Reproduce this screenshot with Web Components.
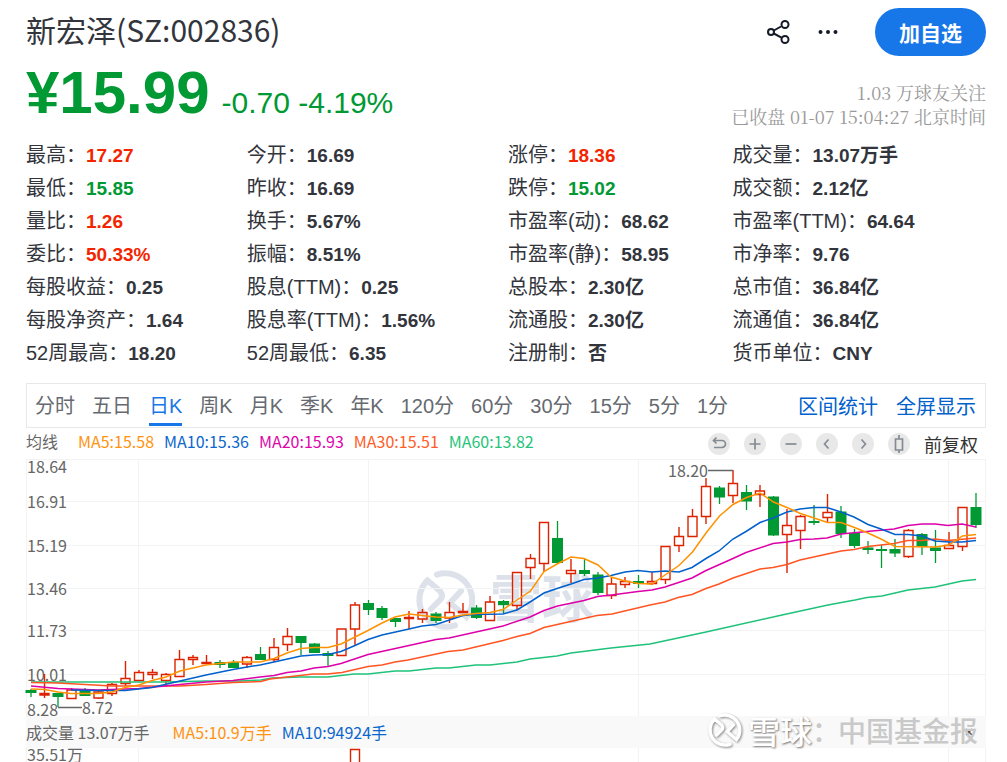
<!DOCTYPE html>
<html lang="zh-CN">
<head>
<meta charset="utf-8">
<meta name="viewport" content="width=device-width, initial-scale=1">
<title>新宏泽(SZ:002836)</title>
<style>
	body {
		margin: 0;
		background: white;
		color: #33353c;
		font-family: "Liberation Sans", "Noto Sans CJK SC", sans-serif;
		--up: #f32500;
		--down: #009933;
		--link: #0060cc;
		--line: #e8e8ea;
	}
</style>
</head>
<body>
<stock-page>
	<stock-header slot="header" price="¥15.99" change="-0.70 -4.19%">
		<span slot="name">新宏泽(SZ:002836)</span>
		<span slot="followers">1.03 万球友关注</span>
		<span slot="time">已收盘 01-07 15:04:27 北京时间</span>
	</stock-header>
	<stock-stats slot="stats"></stock-stats>
	<chart-tabs slot="tabs"></chart-tabs>
	<chart-toolbar slot="toolbar"></chart-toolbar>
	<k-line-chart slot="chart"></k-line-chart>
	<volume-chart slot="volume"></volume-chart>
</stock-page>

<script>
"use strict"

class StockPage extends HTMLElement {
	constructor() {
		super()
		this.attachShadow({ mode: "open" }).innerHTML = `
			<style>
				:host {
					display: block;
					padding: 8px 21px 0 26px;
				}
				main {
					display: flex;
					flex-direction: column;
				}
			</style>
			<main>
				<slot name="header"></slot>
				<slot name="stats"></slot>
				<slot name="tabs"></slot>
				<slot name="toolbar"></slot>
				<slot name="chart"></slot>
				<slot name="volume"></slot>
			</main>
		`
	}
}

class StockHeader extends HTMLElement {
	constructor() {
		super()
		this.attachShadow({ mode: "open" })
	}

	connectedCallback() {
		this.shadowRoot.innerHTML = `
			<style>
				:host {
					display: block;
				}
				.top, .quote, .actions {
					display: flex;
					justify-content: space-between;
				}
				.actions {
					align-items: center;
					gap: 24px;
				}
				h1 {
					margin: 0;
					font: 400 30px/42px "Noto Sans CJK SC", sans-serif;
				}
				button {
					border: 0;
					padding: 0;
					background: none;
					cursor: pointer;
				}
				.icon {
					width: 26px;
					height: 26px;
				}
				.icon svg {
					display: block;
				}
				.follow {
					margin-left: 10px;
					padding: 0 24px;
					border-radius: 24px;
					background: #1776e8;
					color: white;
					font: 700 21px/48px "Noto Sans CJK SC", sans-serif;
				}
				.quote {
					margin-top: 7px;
				}
				.price {
					color: var(--down);
					font-size: 30px;
					line-height: 60px;
				}
				.price strong {
					margin-right: 12px;
					font-size: 60px;
				}
				.info {
					padding-top: 17px;
					color: #999;
					font: 400 18px/24px "Noto Serif CJK SC", "Noto Serif SC", "Noto Sans CJK SC", serif;
					text-align: right;
				}
				.info div {
					white-space: nowrap;
				}
			</style>
			<div class="top">
				<h1><slot name="name"></slot></h1>
				<div class="actions">
					<button class="icon" aria-label="分享">
						<svg width="26" height="26" viewBox="0 0 26 26" fill="none" stroke="#151a28" stroke-width="2">
							<circle cx="6" cy="13" r="3"/>
							<circle cx="20" cy="5.5" r="3.5"/>
							<circle cx="20" cy="20.5" r="3.5"/>
							<path d="M8.8 11.5 16 7.5M8.8 14.5 16.5 18.7"/>
						</svg>
					</button>
					<button class="icon" aria-label="更多">
						<svg width="26" height="26" viewBox="0 0 26 26" fill="#151a28">
							<circle cx="5.5" cy="13" r="2"/>
							<circle cx="13" cy="13" r="2"/>
							<circle cx="20.5" cy="13" r="2"/>
						</svg>
					</button>
					<button class="follow">加自选</button>
				</div>
			</div>
			<div class="quote">
				<div class="price"><strong>${this.getAttribute("price")}</strong>${this.getAttribute("change")}</div>
				<div class="info">
					<div><slot name="followers"></slot></div>
					<div><slot name="time"></slot></div>
				</div>
			</div>
		`
	}
}

// label, value, direction
const STATS = [
	[["最高", "17.27", "up"], ["今开", "16.69"], ["涨停", "18.36", "up"], ["成交量", "13.07万手"]],
	[["最低", "15.85", "down"], ["昨收", "16.69"], ["跌停", "15.02", "down"], ["成交额", "2.12亿"]],
	[["量比", "1.26", "up"], ["换手", "5.67%"], ["市盈率(动)", "68.62"], ["市盈率(TTM)", "64.64"]],
	[["委比", "50.33%", "up"], ["振幅", "8.51%"], ["市盈率(静)", "58.95"], ["市净率", "9.76"]],
	[["每股收益", "0.25"], ["股息(TTM)", "0.25"], ["总股本", "2.30亿"], ["总市值", "36.84亿"]],
	[["每股净资产", "1.64"], ["股息率(TTM)", "1.56%"], ["流通股", "2.30亿"], ["流通值", "36.84亿"]],
	[["52周最高", "18.20"], ["52周最低", "6.35"], ["注册制", "否"], ["货币单位", "CNY"]]
]

class StockStats extends HTMLElement {
	constructor() {
		super()
		const rows = STATS.map(row => `<tr>${row.map(([label, value, dir]) =>
			`<td>${label}：<b class="${dir || ""}">${value}</b></td>`).join("")}</tr>`).join("")
		this.attachShadow({ mode: "open" }).innerHTML = `
			<style>
				:host {
					display: block;
					margin-top: 6px;
				}
				table {
					width: 100%;
					table-layout: fixed;
					border-collapse: collapse;
					font-size: 20px;
					line-height: 33px;
				}
				td {
					height: 33px;
					padding: 0;
					white-space: nowrap;
				}
				b {
					font-size: 19px;
				}
				.up { color: var(--up); }
				.down { color: var(--down); }
			</style>
			<table>
				<colgroup><col style="width:23%"><col style="width:27.2%"><col style="width:23.4%"><col></colgroup>
				<tbody>${rows}</tbody>
			</table>
		`
	}
}

class ChartTabs extends HTMLElement {
	constructor() {
		super()
		const tabs = ["分时", "五日", "日K", "周K", "月K", "季K", "年K", "120分", "60分", "30分", "15分", "5分", "1分"]
		this.attachShadow({ mode: "open" }).innerHTML = `
			<style>
				:host {
					display: flex;
					justify-content: space-between;
					margin-top: 13px;
					padding: 0 9px 0 8px;
					border: 1px solid var(--line);
					font-size: 20px;
					line-height: 39px;
					white-space: nowrap;
				}
				nav {
					display: flex;
					gap: 17px;
				}
				button {
					padding: 5px 0 0;
					margin-bottom: 1px;
					border: 0;
					border-bottom: 3px solid transparent;
					background: none;
					color: #666a70;
					font: inherit;
					line-height: 34px;
					cursor: pointer;
				}
				button.active {
					color: #1776e8;
					border-color: #1776e8;
				}
				.links {
					gap: 18px;
				}
				a {
					padding-top: 4px;
					color: var(--link);
					text-decoration: none;
				}
			</style>
			<nav>${tabs.map(t => `<button class="${t === "日K" ? "active" : ""}">${t}</button>`).join("")}</nav>
			<nav class="links"><a href="#range">区间统计</a><a href="#full">全屏显示</a></nav>
		`
		this.shadowRoot.querySelector("nav").addEventListener("click", e => {
			if (e.target.localName !== "button") return
			this.shadowRoot.querySelector(".active").classList.remove("active")
			e.target.classList.add("active")
		})
	}
}

class ChartToolbar extends HTMLElement {
	constructor() {
		super()
		const tools = [
			["还原", "M5.500 7.500h8.500a3.300 3.300 0 0 1 0 7H6M8.500 4.500 5.500 7.500l3 3"],
			["放大", "M11 5.500v11M5.500 11h11"],
			["缩小", "M5.500 11h11"],
			["左移", "M12.500 6.500 8.500 11l4 4.500"],
			["右移", "M9.500 6.500l4 4.500-4 4.500"],
			["K线", "M7.500 6h7v11h-7zM11 2v4M11 17v3"]
		]
		this.attachShadow({ mode: "open" }).innerHTML = `
			<style>
				:host {
					display: flex;
					justify-content: space-between;
					height: 31px;
					font: 16px/26px "Noto Sans CJK SC", sans-serif;
					white-space: nowrap;
				}
				.legend, .tools {
					display: flex;
					gap: 10px;
				}
				.label {
					margin-right: 10px;
					color: #666;
				}
				.tools {
					align-items: center;
					gap: 14px;
					padding-right: 8px;
				}
				button {
					padding: 0;
					border: 0;
					background: none;
					color: #333;
					font: inherit;
					font-size: 18px;
					cursor: pointer;
				}
				.tool {
					width: 22px;
					height: 22px;
					border-radius: 50%;
					background: #e8e8e8;
				}
				svg {
					display: block;
				}
			</style>
			<div class="legend">
				<span class="label">均线</span>
				<span style="color:#ff9310">MA5:15.58</span>
				<span style="color:#0c66cc">MA10:15.36</span>
				<span style="color:#dd05aa">MA20:15.93</span>
				<span style="color:#ff5c28">MA30:15.51</span>
				<span style="color:#26c47b">MA60:13.82</span>
			</div>
			<div class="tools">
				${tools.map(([name, d]) => `<button class="tool" aria-label="${name}"><svg width="22" height="22" viewBox="0 0 22 22" fill="none" stroke="#858b92" stroke-width="1.700"><path d="${d}"/></svg></button>`).join("")}
				<button>前复权</button>
			</div>
		`
	}
}

// r = rising, f = falling; then high, body top, body bottom, low
const CANDLES = [
	"f 689 690 693 697", "r 674 693.5 695 698", "f 693 693 697 707", "r 688 690 698.5 699",
	"f 688 690 696 696", "r 691 692 698 699", "r 683 684.5 693.5 696", "r 661 678.5 683.5 686",
	"r 670 672.5 680.5 681", "r 669 672.5 674.5 679", "r 673 674.5 680.5 687", "r 650 659.5 676.5 677",
	"r 655 657.5 659.5 665", "r 655 662.5 663.5 664", "f 660 662 665 668", "f 660 662 668 668",
	"r 656 657.5 664 668", "f 647 654 660 660", "r 638 647.5 659.5 662", "r 628 636.5 644.5 651",
	"f 636 636 643 655", "f 643 643.5 653 653", "f 651 653 656 666", "r 629 629 655.5 656",
	"r 602 605 629 646", "f 600 603 610 615", "f 606 608 618 620", "f 618 618 622 627",
	"r 611 617.5 618.5 629", "r 609 612.5 619 623", "f 612 613.5 621 623", "r 602 612.5 618 623",
	"r 603 611.5 612.5 613", "f 605 607.5 618 619", "r 596 602 620.5 621", "f 600 601 605 613",
	"r 572 572.5 605.5 610", "r 554 558.5 567.5 579", "r 522 522.5 563.5 572", "f 521 538 563 563",
	"r 559 570.5 573.5 583", "f 559 570 574 576", "f 572 574.5 593 595", "r 578 584 595.5 599",
	"r 577 581.5 584.5 588", "f 575 581 584 588", "r 572 581.5 583.5 585", "r 546 546.5 579.5 584",
	"r 527 536.5 545.5 552", "r 509 516.5 536.5 537", "r 478 486.5 516.5 524", "f 486 487.5 497.5 504",
	"r 470 483.5 495.5 503", "f 485 492 501.5 510", "r 485 491 494.5 507", "f 496 496.5 535.5 536",
	"r 509 525.5 534.5 573", "r 515 516.5 530.5 549", "f 505 521 523 525", "r 494 512.5 517.5 522",
	"f 506 511.5 534 538", "f 529 533 546 548", "f 541 547.5 550 554", "f 545 549 551 568",
	"f 539 549 553.5 557", "r 529 530.5 556.5 558", "f 533 534 547 555", "f 530 547.5 551 563",
	"r 532 545.5 548.5 549", "r 507 507.5 546.5 551", "f 493 507 525 528"
]

const AVERAGES = {
	"#1fc27a": "31,682 166,682 206,681 240,681 261,680 272,678 300,677 328,677 354,674 368,674 395,671 409,671 436,668 449,668 476,665 490,665 517,662 530,659 557,656 571,653 611,648 650,644 706,632 782,615 828,605 855,600 867,597.5 882,596 908,590 935,587 962,581 976,579.5",
	"#ff5522": "31,682.5 58,683 85,684.5 112,686 180,686 206,684.5 233,682.5 261,681.5 270,679 300,675.5 313,674 327,674 342,672.5 368,666.5 382,665 395,662 408,660 448,651.5 463,650 503,640.5 517,636.5 530,633.5 544,627.5 597,615.5 612,614 650,605 665,602 678,597.5 692,594.5 706,588.5 719,584 733,578 760,569 773,567.5 787,564.5 800,560 841,551 854,549.5 868,546.5 894,543.5 908,540.5 922,540.5 935,539 948,540.5 976,538",
	"#dd00aa": "31,686 58,688.5 98,690 139,688.5 180,684.5 206,682 233,680.5 260,677 274,675.5 287,672.5 301,671 314,668 328,666.5 341,663.5 368,654.5 409,645.5 436,639.5 449,638 503,626 530,617 544,610.5 557.5,606 584,600.5 597.5,596.5 611.5,595 638,591.5 652,590 665,587 692,578 706,570.5 733,558.5 746,552.5 773,543.5 787,542 800,539.5 814,539 827,538 841,534 867,531.5 894,529 908,525.5 922,524 935,524 948,525.5 962,524 976,527",
	"#0060cc": "71,690 98,690.5 125,690.5 152,687.5 180,681 206,675 233,669.5 247,667 260,665 274,662 301,656 314,655 328,654.5 341,651.5 355,645.5 368,639.5 382,635 409,629 422,626 436,624.5 463,615.5 473,614.5 503,614 517,610 530,602 544,593 557,588.5 571,584 584,579.5 598,578 611,575.5 625,572 638,570.5 652,572 665,571 679,572 692,567.5 706,558.5 719,551 733,539 746,531.5 760,522.5 773,518 787,512 800,509 814,507.5 827,507.5 841,512 854,517 868,524.5 881,529 895,534.5 908,534.5 922,536 935,541 949,542 962,542 976,540.5",
	"#ff9200": "31,689 45,689.5 58,692 71,693.5 98,693.5 112,692 125,687.5 139,685 152,680.5 166,677 180,671 206,665 233,662 260,662 274,658.5 287,653 301,648.5 314,647.5 328,647.5 341,644 355,637 368,630.5 382,623 395,617 409,614 422,615.5 436,617 449,617.5 463,615 476,613.5 490,612.5 503,609.5 517,600 530.5,591 544,571.5 557,564 571,557 584,558.5 598,565 611,577 625,581 638,583.5 652,584 665,575 679,565.5 692.5,552 706,533 719.5,516 733,504.5 746.5,497.5 760,493 773.5,502 787,507.5 800.5,513.5 814,518 827.5,522.5 841,522.5 854.5,527.5 868,533 881,539 895,546.5 935,547 949,545 962.5,536 976,534.5"
}

const AXIS = [["18.64", 473], ["16.91", 508], ["15.19", 552], ["13.46", 595], ["11.73", 637], ["10.01", 681], ["8.28", 716]]

const LOGO = `<path d="M437 574.600A27 27 0 0 1 466.500 617L450 603 461 591M455 625.400A27 27 0 0 1 427.500 580.500L440 591Q444 596 440 600L431 609"/>`

class KLineChart extends HTMLElement {
	constructor() {
		super()
		this.attachShadow({ mode: "open" }).innerHTML = `
			<style>
				:host {
					display: block;
				}
				svg {
					display: block;
					width: 100%;
					height: auto;
					overflow: visible;
				}
				text {
					fill: #666;
					font: 16px "Noto Sans CJK SC", sans-serif;
				}
				.brand {
					fill: #dde1ea;
					font-size: 52px;
					font-weight: 700;
				}
			</style>
			<svg viewBox="26 459 960 257" role="img" aria-label="日K线">
				<g fill="none" stroke="#dde1ea" stroke-width="6" stroke-linecap="round">${LOGO}</g>
				<text class="brand" x="490" y="618">雪球</text>
				<path fill="none" stroke="#f3f3f3" d="M26 459.500h960M26 501.500h960M26 545.500h960M26 588.500h960M26 630.500h960M26 674.500h960M26.500 459v257M138.500 459v257M368.500 459v257M638.500 459v257M948.500 459v257M985.500 459v257"/>
				${AXIS.map(([t, y]) => `<text x="27" y="${y}">${t}</text>`).join("")}
				${this.getCandles()}
				${Object.entries(AVERAGES).map(([color, points]) =>
					`<polyline fill="none" stroke="${color}" stroke-width="1.500" points="${points}"/>`).join("")}
				<path fill="none" stroke="#666" stroke-width="1.300" d="M708 470.500h25M58 707.500h24"/>
				<text x="668" y="477">18.20</text>
				<text x="82" y="714">8.72</text>
			</svg>
		`
	}

	getCandles() {
		return CANDLES.map((candle, i) => {
			const [dir, ...values] = candle.split(" ")
			const [high, top, bottom, low] = values.map(Number)
			const x = 31 + i * 13.5
			if (dir === "f") {
				return `<path stroke="#009933" stroke-width="1.300" d="M${x} ${high}V${low}"/>
					<rect x="${x - 5.5}" y="${top}" width="11" height="${bottom - top}" fill="#009933"/>`
			}
			return `<path fill="none" stroke="#dd2200" stroke-width="1.400" d="M${x} ${high}V${top}M${x} ${bottom}V${low}M${x - 4.5} ${top}h9V${bottom}h-9z"/>`
		}).join("")
	}
}

class VolumeChart extends HTMLElement {
	constructor() {
		super()
		this.attachShadow({ mode: "open" }).innerHTML = `
			<style>
				:host {
					display: block;
					position: relative;
					font: 16px/32px "Noto Sans CJK SC", sans-serif;
					white-space: nowrap;
				}
				.legend {
					display: flex;
					align-items: center;
					gap: 10px;
					background: #f9f9f9;
					color: #666;
				}
				.legend span:first-child {
					margin-right: 13px;
				}
				.close {
					display: flex;
					margin: 0 12px 0 auto;
					padding: 0;
					border: 0;
					background: none;
				}
				.plot {
					display: block;
					width: 100%;
					height: auto;
				}
				.plot text {
					fill: #666;
				}
				/* publisher mark laid over the bar */
				.mark {
					position: absolute;
					top: -2px;
					right: 8px;
					display: flex;
					align-items: center;
					height: 32px;
					color: #c9c9c9;
					font-size: 28px;
					font-weight: 500;
					pointer-events: none;
				}
				.mark svg {
					width: 36px;
					height: 36px;
					margin-right: 5px;
					filter: drop-shadow(1px 1px 1px #888);
				}
				.mark b {
					color: white;
					font-size: 32px;
					font-weight: 500;
					text-shadow: 1px 1px 2px #777;
				}
				.mark i {
					width: 26px;
					font-style: normal;
				}
			</style>
			<div class="legend">
				<span>成交量 13.07万手</span>
				<span style="color:#ff9310">MA5:10.9万手</span>
				<span style="color:#0c66cc">MA10:94924手</span>
				<button class="close" aria-label="关闭"><svg width="10" height="10" viewBox="0 0 10 10" stroke="#555" stroke-width="1.500"><path d="M2 2l6 6M8 2 2 8"/></svg></button>
			</div>
			<svg class="plot" viewBox="26 748 960 14" role="img" aria-label="成交量">
				<path fill="none" stroke="#f3f3f3" d="M26.500 748v14M138.500 748v14M638.500 748v14M948.500 748v14M985.500 748v14"/>
				<path fill="none" stroke="#dd2200" stroke-width="1.400" d="M350.500 764V749.500h9V764"/>
				<text x="27" y="761">35.51万</text>
			</svg>
			<div class="mark">
				<svg viewBox="414 568 64 64" fill="none" stroke="white" stroke-width="6" stroke-linecap="round">${LOGO}</svg>
				<b>雪球</b><i>：</i><span>中国基金报</span>
			</div>
		`
	}
}

customElements.define("stock-page", StockPage)
customElements.define("stock-header", StockHeader)
customElements.define("stock-stats", StockStats)
customElements.define("chart-tabs", ChartTabs)
customElements.define("chart-toolbar", ChartToolbar)
customElements.define("k-line-chart", KLineChart)
customElements.define("volume-chart", VolumeChart)
</script>
</body>
</html>
